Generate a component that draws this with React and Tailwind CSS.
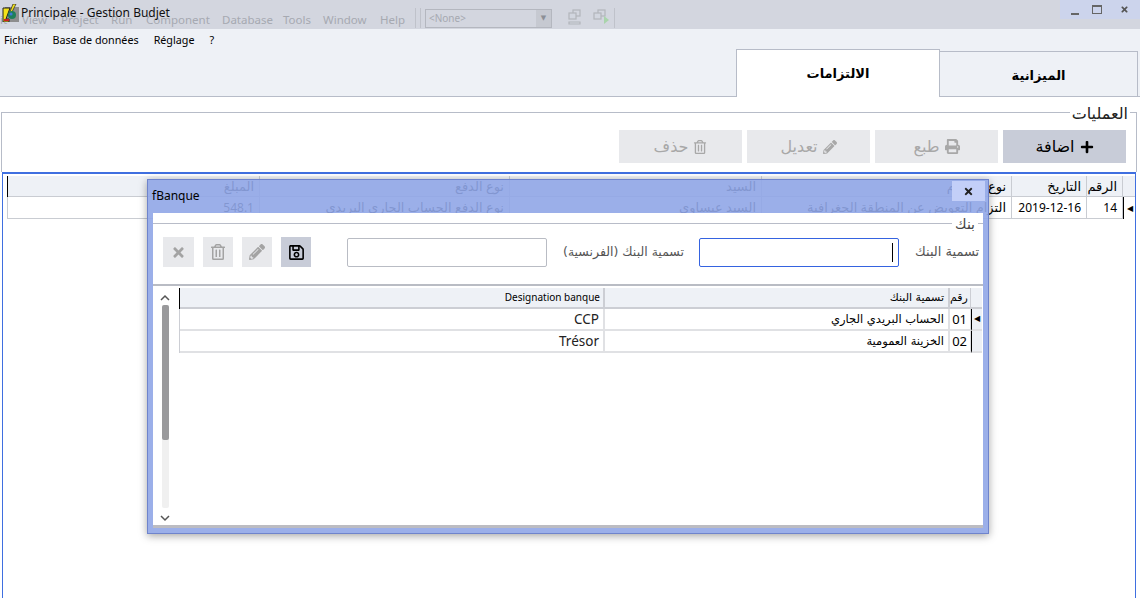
import React from 'react';
import { FaPlus, FaPrint, FaPencilAlt, FaRegTrashAlt, FaTimes, FaRegSave } from 'react-icons/fa';

const latin = "font-['Noto_Sans','DejaVu_Sans',sans-serif]";
const arabic = "font-['DejaVu_Sans',sans-serif]";

const ghostMenu = [
  ['it', 'w-[22px]'],
  ['View', 'w-[39px]'],
  ['Project', 'w-[50px]'],
  ['Run', 'w-[35px]'],
  ['Component', 'w-[76px]'],
  ['Database', 'w-[61px]'],
  ['Tools', 'w-[40px]'],
  ['Window', 'w-[57px]'],
  ['Help', 'w-[35px]'],
];

const mainCols = [
  { w: 'w-[252px]', head: 'المبلغ', cell: '548.1', size: 'text-[12px]' },
  { w: 'w-[250px]', head: 'نوع الدفع', cell: 'نوع الدفع الحساب الجاري البريدي', size: 'text-[13px]' },
  { w: 'w-[252px]', head: 'السيد', cell: 'السيد عيساوي', size: 'text-[13px]' },
  { w: 'w-[250px]', head: 'نوع الالتزام', cell: 'التزام التعويض عن المنطقة الجغرافية', size: 'text-[13px]' },
  { w: 'w-[75px]', head: 'التاريخ', cell: '2019-12-16', size: 'text-[12px]' },
  { w: 'w-[36px]', head: 'الرقم', cell: '14', size: 'text-[12px]' },
];

const bankRows = [
  { no: '01', ar: 'الحساب البريدي الجاري', fr: 'CCP', current: true },
  { no: '02', ar: 'الخزينة العمومية', fr: 'Trésor' },
];

function AppIcon() {
  return (
    <svg width="18" height="18" viewBox="0 0 18 18" className="shrink-0">
      <rect x="3" y="3" width="14" height="15" fill="#8d8d8d" />
      <path d="M1 4h7l-4 11H7v3H1z" fill="#f3e21a" stroke="#222" strokeWidth="1" />
      <path d="M11 0h3L9 10H7z" fill="#f3e21a" stroke="#222" strokeWidth="0.7" />
      <circle cx="10" cy="11" r="4" fill="#1f7f5a" />
      <circle cx="9" cy="10" r="1.6" fill="#3f78d8" />
      <path d="M2 15h5v2H2z" fill="#c22" />
    </svg>
  );
}

function ToolGlyph({ arrow }) {
  return (
    <svg width="18" height="18" viewBox="0 0 18 18" fill="none" stroke="#b2b5bb" strokeWidth="1.2">
      <rect x="6" y="2" width="7" height="6" />
      <rect x="2" y="5" width="7" height="6" fill="#d2d6df" />
      {arrow ? <path d="M12 8l5 4-5 4z" fill="#a9d4ab" stroke="none" /> : <path d="M2 14h11v2H2z" />}
    </svg>
  );
}

function ActionButton({ icon, label, active }) {
  return (
    <button className={`flex h-[33px] w-[123px] items-center justify-center gap-[5px] ${active ? 'bg-[#c8ccd8] text-black' : 'bg-[#e8e9ec] text-[#a8a8a8]'}`}>
      <span className={`${arabic} text-[16px]`}>{label}</span>
      {icon}
    </button>
  );
}

function SquareButton({ children, active, wide }) {
  return (
    <button className={`flex h-[30px] items-center justify-center ${wide ? 'w-[31px]' : 'w-[30px]'} ${active ? 'bg-[#c8ccd8] text-black' : 'bg-[#e8e9ec] text-[#a3a3a3]'}`}>
      {children}
    </button>
  );
}

function MainGrid() {
  return (
    <div className={`flex-1 border-x border-t-2 border-[#3f6fe0] ${latin} text-black`}>
      <div className="mt-[2px] flex flex-col pl-1">
        <div className="flex h-[21px]">
          <div className="w-px bg-black" />
          {mainCols.map((col) => (
            <div key={col.head} className={`${col.w} overflow-hidden whitespace-nowrap border-b border-r border-[#c9ccd2] bg-[#eef1f6] pr-[5px] text-right text-[13px] leading-[20px]`}>
              {col.head}
            </div>
          ))}
          <div className="w-[12px] border-b border-[#c9ccd2] bg-[#eef1f6]" />
        </div>
        <div className="flex h-[22px]">
          <div className="w-px bg-[#c9ccd2]" />
          {mainCols.map((col) => (
            <div key={col.head} className={`${col.w} ${col.size} overflow-hidden whitespace-nowrap border-b border-r border-[#c9ccd2] pr-[5px] text-right leading-[21px]`}>
              {col.cell}
            </div>
          ))}
          <div className="flex w-[12px] items-center border-l border-black pl-[3px] text-[8px]">◀</div>
        </div>
      </div>
    </div>
  );
}

function BankDialog() {
  return (
    <div className="absolute left-[147px] top-[179px] flex h-[355px] w-[842px] flex-col border border-[#6f84cc] bg-[#90a6e7]/90 px-[5px] pb-[5px] shadow-[0_2px_8px_rgba(0,0,0,0.35)]">
      <div className="flex h-[33px] shrink-0 items-start justify-between">
        <span className={`${latin} ml-[-1px] mt-[7px] text-[12px] text-black`}>fBanque</span>
        <button className="mr-[-2px] mt-px flex h-[20px] w-[33px] items-center justify-center bg-[#c3cff8] text-[#222]">
          <FaTimes size={11} />
        </button>
      </div>
      <div className="flex min-h-0 flex-1 flex-col border-b-[3px] border-[#bcbcc2] bg-white">
        <fieldset className="relative mt-[10px] h-[61px] shrink-0 border-t border-[#b8bcc8]">
          <span className={`${arabic} absolute right-[5px] top-[-10px] bg-white px-[3px] text-[14px] leading-[20px] text-[#444]`}>بنك</span>
          <div className={`${arabic} flex items-center pl-[10px] pt-[13px] text-[12.5px] text-[#555]`}>
            <div className="flex gap-[9px]">
              <SquareButton wide><FaTimes size={15} /></SquareButton>
              <SquareButton><FaRegTrashAlt size={16} /></SquareButton>
              <SquareButton><FaPencilAlt size={16} /></SquareButton>
              <SquareButton active><FaRegSave size={17} /></SquareButton>
            </div>
            <input className="ml-[36px] h-[29px] w-[200px] rounded-[2px] border border-[#b9bcc4] bg-white outline-none" />
            <span className="ml-[16px] w-[120px] whitespace-nowrap text-right">تسمية البنك (الفرنسية)</span>
            <div className="ml-[16px] flex h-[29px] w-[200px] items-center rounded-[2px] border border-[#3563e0] pr-[5px]" dir="rtl">
              <span className="h-[19px] w-px bg-black" />
            </div>
            <span className="ml-[16px] whitespace-nowrap text-[13px]">تسمية البنك</span>
          </div>
        </fieldset>
        <div className="h-[2px] shrink-0 bg-[#b9bcc4]" />
        <div className="flex min-h-0 flex-1 pt-[2px]">
          <div className="flex w-[26px] shrink-0 flex-col items-center pr-[2px] text-[#555]">
            <svg width="12" height="8" viewBox="0 0 12 8" className="mt-[6px]" fill="none" stroke="#555" strokeWidth="1.5"><path d="M2 6l4-4 4 4" /></svg>
            <div className="mt-[3px] flex h-[203px] w-[7px] flex-col rounded-[2px] bg-[#f0f0f0]">
              <div className="h-[135px] rounded-[2px] bg-[#9a9a9c]" />
            </div>
            <svg width="12" height="8" viewBox="0 0 12 8" className="mt-[6px]" fill="none" stroke="#555" strokeWidth="1.5"><path d="M2 2l4 4 4-4" /></svg>
          </div>
          <div className={`${arabic} flex flex-col text-[11.5px] text-black`}>
            <div className="flex h-[21px]">
              <div className="w-px bg-black" />
              <div className={`${latin} w-[425px] border-b-2 border-r-2 border-[#ccced4] bg-[#eef1f6] pr-[3px] text-right text-[10px] leading-[19px]`}>Designation banque</div>
              <div className="w-[345px] border-b-2 border-r-2 border-[#ccced4] bg-[#eef1f6] pr-[4px] text-right text-[11px] leading-[19px]">تسمية البنك</div>
              <div className="w-[21px] border-b-2 border-r border-[#ccced4] bg-[#eef1f6] pr-[3px] text-right text-[11px] leading-[19px]">رقم</div>
              <div className="w-[11px] border-b-2 border-[#ccced4] bg-[#eef1f6]" />
            </div>
            {bankRows.map((row) => (
              <div key={row.no} className="flex h-[22px]">
                <div className="w-px bg-[#ccced4]" />
                <div className={`${latin} w-[425px] border-b-2 border-r-2 border-[#e0e1e4] pr-[4px] text-right text-[13.5px] leading-[20px] text-[#222]`}>{row.fr}</div>
                <div className="w-[345px] border-b-2 border-r-2 border-[#e0e1e4] pr-[4px] text-right leading-[20px]">{row.ar}</div>
                <div className={`${latin} w-[21px] border-b-2 border-r border-[#e0e1e4] pr-[3px] text-right text-[13px] leading-[20px]`}>{row.no}</div>
                <div className="flex w-[11px] items-center border-b-2 border-l border-[#e0e1e4] border-l-black bg-[#eef1f6] pl-[2px] text-[8px]">{row.current ? '◀' : ''}</div>
              </div>
            ))}
          </div>
        </div>
      </div>
    </div>
  );
}

export default function App() {
  return (
    <div className={`${latin} relative flex h-[598px] w-[1145px] flex-col overflow-hidden bg-white`}>
      {/* bandeau du titre, avec l'IDE qui transparait dessous */}
      <div className="flex h-[29px] w-[1140px] shrink-0 bg-[#d3d6df]">
        <div className="flex items-center pt-[11px] text-[11.5px] text-[#a6a9b1]">
          {ghostMenu.map(([name, w]) => (
            <span key={name} className={`${w} whitespace-nowrap`}>{name}</span>
          ))}
        </div>
        <div className="mt-[8px] h-[20px] border-x border-[#bfc2ca] px-[1px]"><div className="h-full w-[2px]" /></div>
        <div className="ml-[4px] mt-[9px] flex h-[19px] w-[127px] items-center justify-between border border-[#b4b7bf] pl-[3px] text-[10px] text-[#a6a9b1]">
          &lt;None&gt;
          <span className="flex h-full w-[15px] items-center justify-center bg-[#c6c9d1] text-[7px] text-[#8c8f96]">▼</span>
        </div>
        <div className="ml-[15px] mt-[8px] flex gap-[7px]"><ToolGlyph /><ToolGlyph arrow /></div>
        <div className="ml-[4px] mt-[8px] h-[20px] w-px bg-[#bfc2ca]" />
        <div className="ml-auto flex h-[19px] w-[80px] items-center bg-[#ccd4ec] pl-[11px] text-[#555]">
          <span className="mt-[8px] h-[2px] w-[8px] bg-[#666]" />
          <span className="ml-[13px] h-[9px] w-[10px] border border-t-2 border-[#666]" />
          <span className="ml-[18px]"><FaTimes size={9} /></span>
        </div>
      </div>
      <div className="absolute left-[2px] top-[4px] flex items-center gap-[1px]">
        <AppIcon />
        <span className="text-[12px] text-[#111]">Principale - Gestion Budjet</span>
      </div>

      {/* menus et onglets */}
      <div className="flex h-[68px] w-[1140px] shrink-0 flex-col border-b border-[#b7bcc8] bg-[#eef1f6]">
        <div className="flex gap-[15px] pl-[4px] pt-[3px] text-[10.75px] text-black">
          <span>Fichier</span><span>Base de données</span><span>Réglage</span><span>?</span>
        </div>
        <div className={`${arabic} mt-auto flex items-end justify-end pr-[2px] text-[13px] text-black`}>
          <div className="mb-[-1px] flex h-[48px] w-[204px] justify-center border-x border-t border-[#b7bcc8] bg-white pt-[14px] font-bold">الالتزامات</div>
          <div className="flex h-[45px] w-[198px] justify-center border-r border-t border-[#b7bcc8] pt-[14px] font-bold">الميزانية</div>
        </div>
      </div>

      {/* العمليات */}
      <div className="ml-px mt-[15px] flex h-[60px] w-[1136px] shrink-0 flex-col border-x border-t border-[#b7bcc8]">
        <span className={`${arabic} absolute right-[15px] top-[103px] bg-white px-[2px] text-[16px] leading-[22px] text-[#222]`}>العمليات</span>
        <div className="mr-[10px] mt-[17px] flex justify-end gap-[5px]">
          <ActionButton label="حذف" icon={<FaRegTrashAlt size={14} />} />
          <ActionButton label="تعديل" icon={<FaPencilAlt size={14} />} />
          <ActionButton label="طبع" icon={<FaPrint size={15} />} />
          <ActionButton active label="اضافة" icon={<FaPlus size={14} />} />
        </div>
      </div>

      <div className="ml-[2px] flex w-[1134px] flex-1 flex-col">
        <MainGrid />
      </div>

      <BankDialog />
    </div>
  );
}
